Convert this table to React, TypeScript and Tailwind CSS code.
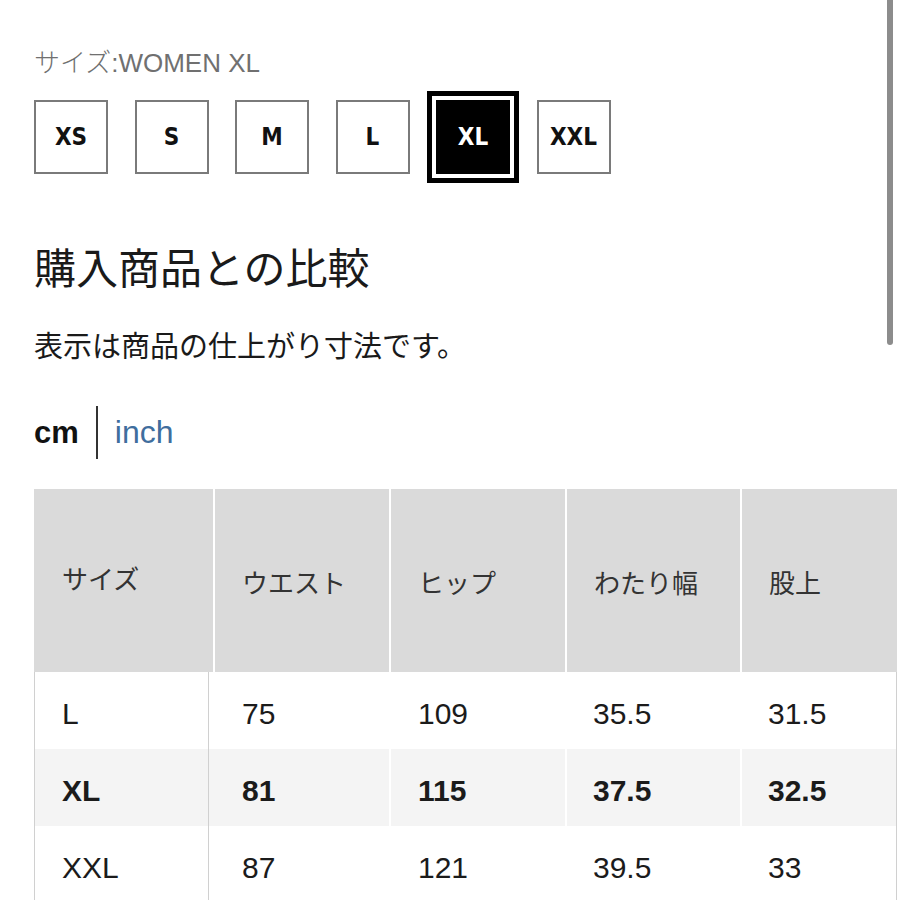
import React from "react";

const sizes = ["XS", "S", "M", "L", "XL", "XXL"];

const rows = [
  { size: "L", values: ["75", "109", "35.5", "31.5"], current: false },
  { size: "XL", values: ["81", "115", "37.5", "32.5"], current: true },
  { size: "XXL", values: ["87", "121", "39.5", "33"], current: false },
];

const headers = ["ウエスト", "ヒップ", "わたり幅", "股上"];

const font = { fontFamily: '"Liberation Sans", "Noto Sans CJK JP", sans-serif' };

const App: React.FC = () => {
  const selected = "XL";

  return (
    <div className="relative w-[900px] h-[900px] overflow-hidden bg-white text-[#1b1b1b]" style={font}>
      {/* scrollbar */}
      <div className="absolute right-[7px] top-0 w-[6px] h-[345px] rounded-b-full bg-[#8c8c8c]" />

      <div className="pl-[34px]">
        <p className="pt-[47px] text-[26px] leading-[32px] text-[#707070] font-light">サイズ:WOMEN XL</p>

        <div className="mt-[21px] flex gap-[26.5px] h-[74px]">
          {sizes.map((s) => (
            <div
              key={s}
              className={
                s === selected
                  ? "w-[74px] h-[74px] flex items-center justify-center bg-black text-white outline-[5px] outline-solid outline-black outline-offset-[4px]"
                  : "w-[74px] h-[74px] flex items-center justify-center border-2 border-[#7a7a7a] text-[#111]"
              }
            >
              <span
                className="text-[24px] font-bold leading-none"
                style={{ fontFamily: '"Liberation Sans Narrow", "DejaVu Sans Condensed", sans-serif' }}
              >
                {s}
              </span>
            </div>
          ))}
        </div>

        <h2 className="mt-[73px] text-[42px] leading-[46px] font-normal text-[#1a1a1a]">購入商品との比較</h2>

        <p className="mt-[37px] text-[29px] leading-[34px] text-[#1a1a1a]">表示は商品の仕上がり寸法です。</p>

        <div className="mt-[41px] flex items-center h-[54px]">
          <span className="text-[31px] font-bold leading-none text-[#111]">cm</span>
          <span className="ml-[17px] w-[2px] h-[53px] bg-[#333]" />
          <span className="ml-[17px] text-[32px] leading-none text-[#3f6e9e]">inch</span>
        </div>

        {/* table */}
        <div className="mt-[30px] w-[863px]">
          <div className="flex h-[183px] gap-[2px] bg-white">
            <div className="w-[179px] bg-[#dadada] flex items-center pl-[28px] text-[26px] text-[#333]">サイズ</div>
            {headers.map((h, i) => (
              <div
                key={h}
                className={`${i === 3 ? "w-[155px]" : i === 2 ? "w-[173px]" : "w-[174px]"} bg-[#dadada] flex items-center pl-[27px] pt-[8px] text-[26px] text-[#333]`}
              >
                {h}
              </div>
            ))}
          </div>

          {rows.map((r) => (
            <div key={r.size} className="flex h-[77px] bg-white">
              <div
                className={`w-[175px] border-x border-[#d0d0d0] flex items-center pl-[27px] pt-[6px] text-[30px] ${
                  r.current ? "bg-[#f4f4f4] font-bold" : "bg-white"
                }`}
              >
                {r.size}
              </div>
              {r.values.map((v, i) => (
                <div
                  key={i}
                  className={`${
                    i === 0
                      ? "w-[180px] pl-[33px]"
                      : i === 1
                      ? "w-[174px] ml-[2px] pl-[27px]"
                      : i === 2
                      ? "w-[173px] ml-[2px] pl-[26px]"
                      : "w-[155px] ml-[2px] pl-[26px] border-r border-[#d0d0d0]"
                  } flex items-center pt-[6px] text-[30px] ${r.current ? "bg-[#f4f4f4] font-bold" : "bg-white"}`}
                >
                  {v}
                </div>
              ))}
            </div>
          ))}
        </div>
      </div>
    </div>
  );
};

export default App;
